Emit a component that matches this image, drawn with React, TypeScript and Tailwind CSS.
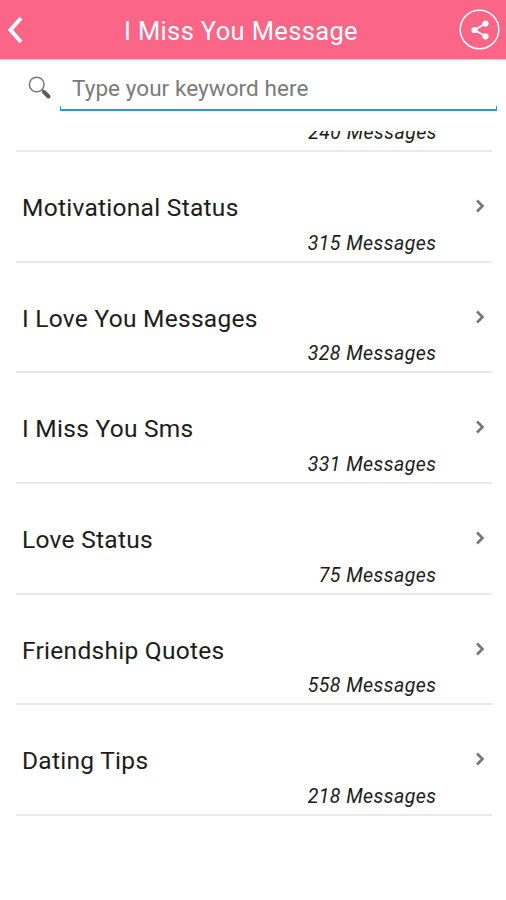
const categories = [
  { title: "Motivational Status", count: 315 },
  { title: "I Love You Messages", count: 328 },
  { title: "I Miss You Sms", count: 331 },
  { title: "Love Status", count: 75 },
  { title: "Friendship Quotes", count: 558 },
  { title: "Dating Tips", count: 218 },
]

export default function App() {
  return (
    <div className="flex h-[900px] w-[506px] flex-col overflow-hidden bg-white font-['Roboto',sans-serif] text-[#1c1c1c]">
      {/* Header */}
      <header className="flex h-[60px] shrink-0 items-center border-b border-[#fdc3d0] bg-[#fa6588] pt-[2px] pr-[6px] pl-[7px] text-white">
        <svg className="-mt-px" width="40" height="32" viewBox="0 0 40 32" fill="none" stroke="currentColor" strokeWidth="4">
          <path d="M14 4 3.500 16 14 28" />
        </svg>
        <h1 className="ml-[77px] text-[25.5px] leading-[30px] tracking-[0.35px]">I Miss You Message</h1>
        <svg className="-mt-[2px] ml-auto" width="41" height="41" viewBox="0 0 41 41" fill="none" stroke="currentColor">
          <circle cx="20.500" cy="20.500" r="19.300" strokeWidth="1.500" />
          <path d="m26.500 14.500-11 6.500 11 6.300" strokeWidth="1.800" />
          <g fill="currentColor" stroke="none">
            <circle cx="26.500" cy="14.500" r="3.100" />
            <circle cx="15.500" cy="21" r="3.100" />
            <circle cx="26.500" cy="27.300" r="3.100" />
          </g>
        </svg>
      </header>

      {/* Search */}
      <div className="flex h-[71px] shrink-0 pt-[15px] pr-[9px] pl-[27px]">
        <svg className="shrink-0" width="33" height="28" viewBox="0 0 33 28" fill="none">
          <circle cx="9.700" cy="9.500" r="7.300" stroke="#777" strokeWidth="1.500" />
          <path d="m14.500 14.500 3 3" stroke="#777" strokeWidth="2" />
          <path d="m17 17 4.500 4.500" stroke="#5c5c5c" strokeWidth="4" strokeLinecap="round" />
        </svg>
        <div className="flex h-[36px] flex-1 flex-col justify-between">
          <p className="-mt-px pl-[12px] text-[22.5px] leading-[28px] tracking-[0.06px] text-[#7a7a7a]">
            Type your keyword here
          </p>
          <div className="h-[5px] shrink-0 border-x border-b-2 border-[#2b9bc4]" />
        </div>
      </div>

      {/* List */}
      <main className="min-h-0 flex-1 overflow-hidden pr-[14px] pl-[16px]">
        <div className="flex h-[21px] items-end overflow-hidden border-b-2 border-[#e9e9e9] pr-[55px] pb-[4px]">
          <p className="w-full text-right text-[19.5px] leading-[26px] tracking-[0.45px] italic">240 Messages</p>
        </div>
        {categories.map((item) => (
          <div key={item.title} className="h-[110.700px] border-b-2 border-[#e9e9e9] pt-[39px] pl-[6px]">
            <div className="flex items-center justify-between pr-[7px]">
              <h2 className="text-[24.5px] leading-[34px] tracking-[0.28px]">{item.title}</h2>
              <svg className="-mt-[4px]" width="10" height="14" viewBox="0 0 10 14" fill="none" stroke="#777" strokeWidth="2.700">
                <path d="m2 1.500 5.500 5.500L2 12.500" />
              </svg>
            </div>
            <p className="mt-[4.500px] pr-[55.500px] text-right text-[19.5px] leading-[28px] tracking-[0.45px] italic">
              {item.count} Messages
            </p>
          </div>
        ))}
      </main>
    </div>
  )
}
